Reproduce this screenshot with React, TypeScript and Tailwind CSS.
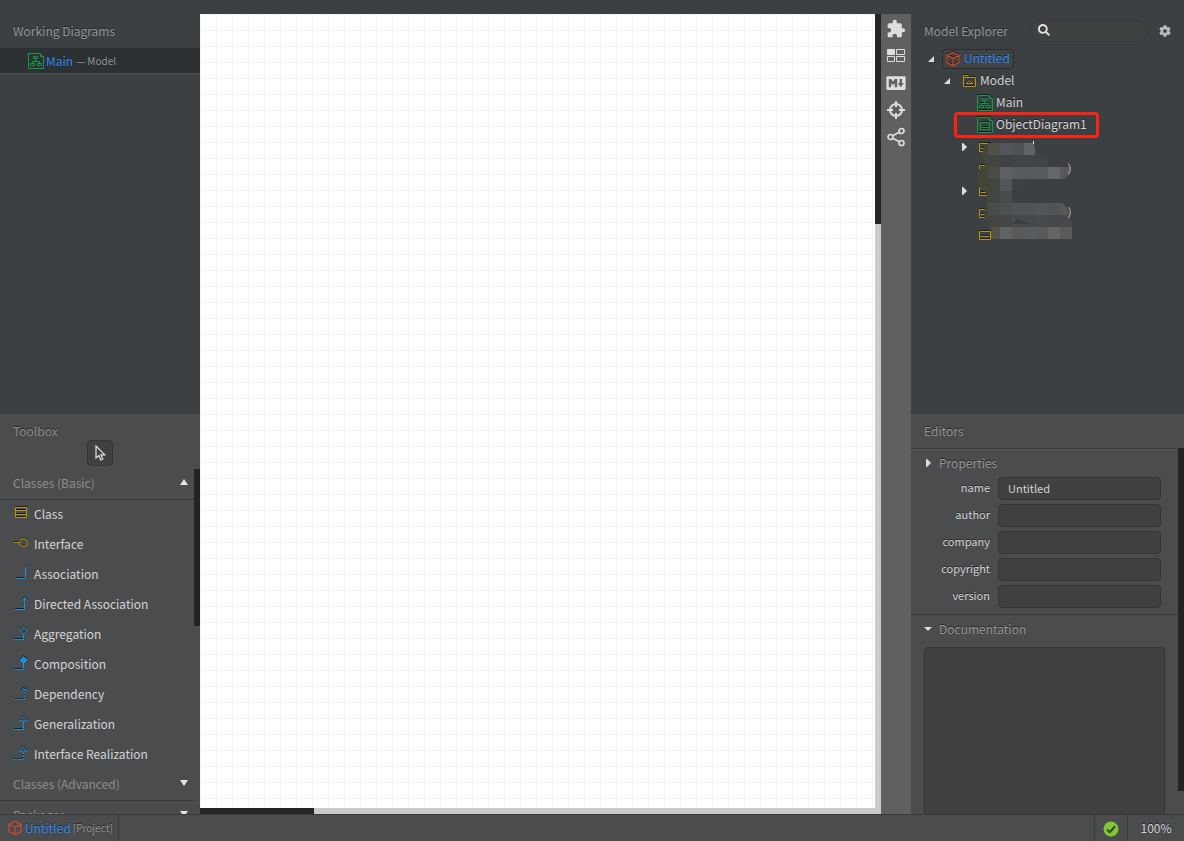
import type { ReactNode } from "react"
import { FaCog, FaSearch } from "react-icons/fa"
import { IoLogoMarkdown } from "react-icons/io"
import { MdExtension } from "react-icons/md"

const toolIcons: Record<string, ReactNode> = {
    class: <path d="M1.5 1.5h11v10h-11z M1.5 4.5h11 M1.5 8.5h11" stroke="#b8960c" />,
    interface: <path d="M0 6.5h5.5 M13.5 6.5a4 4 0 1 1-8 0a4 4 0 1 1 8 0" stroke="#b8960c" />,
    association: <path d="M2 12.5h9.500V1" />,
    directed: <path d="M1 13.5h9.500V1.5 M7 5l3.500-3.500L14 5" />,
    aggregation: <path d="M0 13.5h9.500V7.500 M9.500 .5l3.200 3.500l-3.200 3.500l-3.200-3.500z" />,
    composition: (
        <>
            <path d="M0 13.5h9.500V7" />
            <path d="M9.500 .5l3.500 3.500l-3.500 3.500l-3.500-3.500z" fill="#1a8ee0" />
        </>
    ),
    dependency: (
        <>
            <path d="M1 13.5h9.500V2" strokeDasharray="2 1" />
            <path d="M7 5l3.500-3.500L14 5" />
        </>
    ),
    generalization: <path d="M0 13.5h9.500V5 M5.500 5l4-4l4 4z" />,
    realization: (
        <>
            <path d="M0 13.5h9.500V5" strokeDasharray="2 1" />
            <path d="M5.500 5l4-4l4 4z" />
        </>
    ),
}

const tools = [
    { icon: "class", label: "Class" },
    { icon: "interface", label: "Interface" },
    { icon: "association", label: "Association" },
    { icon: "directed", label: "Directed Association" },
    { icon: "aggregation", label: "Aggregation" },
    { icon: "composition", label: "Composition" },
    { icon: "dependency", label: "Dependency" },
    { icon: "generalization", label: "Generalization" },
    { icon: "realization", label: "Interface Realization" },
]

const fields = [
    { name: "name", value: "Untitled" },
    { name: "author", value: "" },
    { name: "company", value: "" },
    { name: "copyright", value: "" },
    { name: "version", value: "" },
]

const CubeIcon = () => (
    <svg width="14" height="16" viewBox="0 0 14 16" fill="none" stroke="#d4492f" strokeWidth="1.2" strokeLinejoin="round">
        <path d="M7 1.5L13 4.3V11.5L7 14.7L1 11.5V4.3z M1 4.3L7 7.3L13 4.3 M7 7.3V14.7" />
    </svg>
)

const DiagramIcon = () => (
    <svg width="16" height="16" viewBox="0 0 16 16" fill="none" stroke="#0f9c46">
        <path d="M.5 .5h11.500l3.500 3.500v11.500H.5z M12.500 .5v3h3" />
        <path d="M5.500 3.500h4v2h-4z M2.500 10.500h4v2h-4z M9.500 10.500h4v2h-4z M7.500 6v2.500 M4.500 10.500v-2h7v2" />
    </svg>
)

const ObjectDiagramIcon = () => (
    <svg width="16" height="16" viewBox="0 0 16 16" fill="none" stroke="#0f9c46">
        <path d="M.5 .5h11.500l3.500 3.500v11.500H.5z M12.500 .5v3h3" />
        <path d="M3.500 5.500h9v7h-9z M5 10.500h6" />
    </svg>
)

const FolderIcon = () => (
    <svg width="14" height="12" viewBox="0 0 14 12" fill="none" stroke="#b8960c">
        <path d="M1.500 .5h4l1 2h7v9h-12z M1.500 2.500h5 M4.500 8.500h6l-3-3z" />
    </svg>
)

const BoxIcon = () => (
    <svg width="12" height="9" viewBox="0 0 12 9" fill="none" stroke="#b8960c">
        <path d="M.5 .5h11v8H.5z M2 5.500h8" />
    </svg>
)

const Expanded = () => (
    <svg width="6" height="6" viewBox="0 0 6 6" fill="#dcdcdc"><path d="M6 0v6H0z" /></svg>
)

const Collapsed = () => (
    <svg width="5" height="8" viewBox="0 0 5 8" fill="#dcdcdc"><path d="M0 0h1l4 4l-4 4h-1z" /></svg>
)

// Pixelated smudge that hides the names of the last rows
const Mosaic = () => {
    const cells = [
        [12, 3, "#53504a"], [24, 3, "#53565b"], [36, 3, "#505355"], [48, 3, "#616466"],
        [12, 15, "#434542"], [24, 15, "#404345"], [36, 15, "#414445"], [48, 15, "#424547"], [60, 15, "#404446"],
        [12, 27, "#4a4b45"], [24, 27, "#5d6164"], [36, 27, "#585b5e"], [48, 27, "#57595b"], [60, 27, "#585b5c"], [72, 27, "#646767"], [84, 27, "#575a5c"],
        [12, 39, "#434541"], [24, 39, "#51565b"], [36, 39, "#3f4143"],
        [12, 51, "#424542"], [24, 51, "#484b4c"],
        [12, 63, "#4b4c4a"], [24, 63, "#4d5051"], [36, 63, "#515354"], [48, 63, "#505354"], [60, 63, "#535658"], [72, 63, "#505455"], [84, 63, "#55595a"],
        [12, 75, "#444641"], [24, 75, "#434648"], [36, 75, "#47494b"], [48, 75, "#46494b"], [60, 75, "#474a4c"], [72, 75, "#444849"], [84, 75, "#47494b"],
        [15, 87, "#565246"], [24, 87, "#5f6264"], [36, 87, "#57595b"], [48, 87, "#5a5d5f"], [60, 87, "#57595b"], [72, 87, "#636565"], [84, 87, "#585a5c"],
    ]
    return (
        <svg className="absolute top-[92px] left-[65px] pointer-events-none" width="100" height="104" viewBox="0 0 100 104" aria-hidden="true">
            <path d="M13 3Q7 4 6 15L10 25Q1 27 1 38Q2 46 7 50L11 54V63Q7 70 9 80L13 87H16V3z" fill="#45463a" />
            <clipPath id="smudge">
                <path d="M12 0H54Q60 3 59 15L80 17Q92 20 94 27Q94 36 88 39H48V51H36V63H86Q92 66 93 76L96 82V99H15V87H12Q8 80 12 66z" />
            </clipPath>
            <g clipPath="url(#smudge)">
                {cells.map(([x, y, fill]) => (
                    <rect key={`${x}-${y}`} x={x} y={y} width="12" height="12" fill={String(fill)} />
                ))}
            </g>
            <path d="M41 78l-4 6h17z" fill="#3b4042" />
            <path d="M57.500 1v3" stroke="#e8e8e8" />
            <path d="M92.500 23.500q3.500 5.500 0 11 M92.500 67q3.500 5.500 0 11" stroke="#d0b486" fill="none" />
        </svg>
    )
}

const TreeRow = ({ level, arrow, icon, label, selected, marked }: { level: number, arrow?: ReactNode, icon: ReactNode, label?: string, selected?: boolean, marked?: boolean }) => {
    const indent = ["pl-[15px]", "pl-[31px]", "pl-[47px]"][level]
    return (
        <li className={`relative flex h-[22px] items-center ${indent}`}>
            <span className={`flex w-4 shrink-0 items-center ${level == 2 ? "pl-1" : "pl-[2px]"}`}>{arrow}</span>
            <span className={`flex h-5 items-center gap-[3px] rounded-[3px] border pl-[2px] pr-[3px] ${selected ? "border-[#292c2d] bg-[#424344] text-[#2f8af0]" : "border-transparent"}`}>
                <span className="flex w-4 justify-center drop-shadow-[0_-1px_0_#1c1e20]">{icon}</span>
                <span className="leading-5 pb-[2px]">{label}</span>
            </span>
            {marked && <span className="absolute -top-[2px] left-[43px] h-[26px] w-[145px] rounded-[4px] border-3 border-[#fb2313]" />}
        </li>
    )
}

const Title = ({ children }: { children: ReactNode }) => (
    <h2 className="flex h-[34px] shrink-0 items-center pl-[13px] text-[#969798]">{children}</h2>
)

const LeftSidebar = () => (
    <aside className="flex w-[200px] shrink-0 flex-col">
        <section className="min-h-0 flex-1">
            <Title>Working Diagrams</Title>
            <a href="#main" className="flex h-[26px] items-center border-t border-b border-t-[#292c2e] border-b-[#4c5052] bg-[#2e3133] pl-7">
                <DiagramIcon />
                <span className="ml-[2px] text-[#2f8af0]">Main</span>
                <span className="ml-[3px] text-[10px] text-[#939495]">— Model</span>
            </a>
        </section>
        <section className="flex h-[400px] shrink-0 flex-col bg-[#4b4c4d]">
            <h2 className="shrink-0 pt-2 pl-[13px] leading-[18px] text-[#8d8e8f]">Toolbox</h2>
            <button type="button" aria-label="Select" className="mx-auto flex size-[26px] shrink-0 items-center justify-center rounded-[4px] border border-[#343635] bg-[#404241]">
                <svg width="12" height="16" viewBox="0 0 12 16" fill="none" stroke="#e2e2e2" strokeWidth="1.2">
                    <path d="M2 1V13L4.800 10.500L6.800 15L8.800 14L6.900 9.800H10.800z" />
                </svg>
            </button>
            <div className="mt-[3px] flex min-h-0 flex-1 overflow-hidden">
                <div className="flex-1">
                    <ToolGroup label="Classes (Basic)" open />
                    <ul>
                        {tools.map((tool) => (
                            <li key={tool.label}>
                                <button type="button" className="flex h-[30px] w-full items-start gap-[6px] pl-[14px]">
                                    <svg className="mt-[6px] overflow-visible drop-shadow-[0_-1px_0_#1c1e20]" width="14" height="14" viewBox="0 0 14 14" fill="none" stroke="#1a8ee0">
                                        {toolIcons[tool.icon]}
                                    </svg>
                                    <span className="leading-[28px]">{tool.label}</span>
                                </button>
                            </li>
                        ))}
                    </ul>
                    <ToolGroup label="Classes (Advanced)" />
                    <ToolGroup label="Packages" />
                </div>
                <div className="w-[6px]"><div className="h-[157px] bg-[#242424]" /></div>
            </div>
        </section>
    </aside>
)

const ToolGroup = ({ label, open }: { label: string, open?: boolean }) => (
    <button type="button" className="flex h-[31px] w-full items-center justify-between border-b border-[#38393a] pr-[6px] pb-[2px] pl-[13px] text-[#8d8e8f]">
        {label}
        <svg className="mb-[2px]" width="8" height="6" viewBox="0 0 8 6" fill="#e4e4e4">
            <path d={open ? "M4 0L8 6H0z" : "M0 0H8L4 6z"} />
        </svg>
    </button>
)

const Canvas = () => (
    <main className="flex min-w-0 flex-1 flex-col">
        <div className="flex min-h-0 flex-1">
            <div className="flex-1 bg-white bg-[linear-gradient(to_right,#f3f3f3_1px,transparent_1px),linear-gradient(to_bottom,#f3f3f3_1px,transparent_1px)] bg-size-[16px_16px]" />
            <div className="w-[6px] bg-[#cbcbcb]"><div className="h-[210px] bg-[#242424]" /></div>
        </div>
        <div className="h-[6px] bg-[#cbcbcb]"><div className="h-full w-[114px] bg-[#242424]" /></div>
    </main>
)

const Toolbar = () => (
    <nav className="flex w-[30px] shrink-0 flex-col items-center bg-[#5f6062] pt-px text-[#dedede]">
        <button type="button" aria-label="Extensions" className="flex h-[27px] items-center"><MdExtension size={20} /></button>
        <button type="button" aria-label="Layout" className="flex h-[27px] items-center">
            <svg width="18" height="13" viewBox="0 0 18 13" fill="none" stroke="currentColor">
                <path d="M.5 .5h7v5h-7z" fill="currentColor" />
                <path d="M9.500 .5h8v5h-8z M.5 7.500h7v5h-7z M9.500 7.500h8v5h-8z" />
            </svg>
        </button>
        <button type="button" aria-label="Markdown" className="flex h-[27px] items-center"><IoLogoMarkdown size={22} /></button>
        <button type="button" aria-label="Locate" className="flex h-[27px] items-center">
            <svg width="18" height="18" viewBox="0 0 18 18" fill="none" stroke="currentColor" strokeWidth="2">
                <circle cx="9" cy="9" r="6" />
                <path d="M9 0v6 M9 12v6 M0 9h6 M12 9h6" />
            </svg>
        </button>
        <button type="button" aria-label="Share" className="flex h-[27px] items-center">
            <svg width="18" height="20" viewBox="0 0 18 20" fill="none" stroke="currentColor" strokeWidth="1.7">
                <circle cx="3.5" cy="10" r="2.5" />
                <circle cx="14.5" cy="4" r="2.5" />
                <circle cx="14.5" cy="16" r="2.5" />
                <path d="M5.700 8.800L12.300 5.200 M5.700 11.200L12.300 14.800" />
            </svg>
        </button>
    </nav>
)

const Explorer = () => (
    <section className="min-h-0 flex-1">
        <div className="flex items-center justify-between pr-[13px]">
            <Title>Model Explorer</Title>
            <div className="flex items-center gap-[11px]">
                <label className="flex h-[22px] w-[117px] items-center rounded-full border border-[#383c3d] bg-[#404241] pb-[2px] pl-[6px]">
                    <FaSearch size={12} className="shrink-0 text-[#e0e0e0]" />
                    <input type="text" aria-label="Search" className="w-full min-w-0 bg-transparent px-1 outline-none" />
                </label>
                <button type="button" aria-label="Settings" className="text-[#b9babb]"><FaCog size={12} /></button>
            </div>
        </div>
        <ul className="relative">
            <TreeRow level={0} arrow={<Expanded />} icon={<CubeIcon />} label="Untitled" selected />
            <TreeRow level={1} arrow={<Expanded />} icon={<FolderIcon />} label="Model" />
            <TreeRow level={2} icon={<DiagramIcon />} label="Main" />
            <TreeRow level={2} icon={<ObjectDiagramIcon />} label="ObjectDiagram1" marked />
            <TreeRow level={2} arrow={<Collapsed />} icon={<BoxIcon />} />
            <TreeRow level={2} icon={<BoxIcon />} />
            <TreeRow level={2} arrow={<Collapsed />} icon={<BoxIcon />} />
            <TreeRow level={2} icon={<BoxIcon />} />
            <TreeRow level={2} icon={<BoxIcon />} />
            <Mosaic />
        </ul>
    </section>
)

const Editors = () => (
    <section className="flex h-[400px] shrink-0 flex-col bg-[#4b4c4d]">
        <Title>Editors</Title>
        <div className="flex min-h-0 flex-1 overflow-hidden">
            <div className="flex flex-1 flex-col border-t border-[#38393a]">
                <h3 className="flex h-7 shrink-0 items-center border-t border-[#58595a] pb-[2px] pl-[15px] text-[#969798]">
                    <Collapsed /><span className="ml-2">Properties</span>
                </h3>
                <div className="flex flex-col gap-1 pb-[6px]">
                    {fields.map((field) => (
                        <div key={field.name} className="flex items-center gap-2 pr-[17px] text-[11px]">
                            <label htmlFor={field.name} className="w-[79px] shrink-0 pb-[3px] text-right">{field.name}</label>
                            <input id={field.name} type="text" defaultValue={field.value} className="h-[23px] w-full min-w-0 rounded-[4px] border border-[#343635] bg-[#404241] px-[9px] pb-[2px] outline-none" />
                        </div>
                    ))}
                </div>
                <h3 className="flex h-[33px] shrink-0 items-center border-t border-[#38393a] pb-[5px] pl-[13px] text-[#969798]">
                    <svg width="8" height="4" viewBox="0 0 8 4" fill="#dcdcdc"><path d="M0 0h8l-4 4z" /></svg>
                    <label htmlFor="doc" className="ml-[7px]">Documentation</label>
                </h3>
                <textarea id="doc" className="mx-[13px] h-[200px] shrink-0 resize-none rounded-[4px] border border-[#343635] bg-[#404241] outline-none" />
            </div>
            <div className="w-[6px]"><div className="h-[343px] bg-[#242424]" /></div>
        </div>
    </section>
)

const StatusBar = () => (
    <footer className="flex h-[27px] shrink-0 border-t border-[#38393a] bg-[#4b4c4d]">
        <div className="flex items-center border-r border-[#38393a] pr-[5px] pl-2">
            <CubeIcon />
            <span className="ml-[3px] text-[#2f8af0]">Untitled</span>
            <span className="ml-[2px] text-[10px] text-[#939495]">[Project]</span>
        </div>
        <div className="ml-auto flex w-[33px] items-center justify-center border-l border-[#38393a] pt-[2px]">
            <svg width="16" height="16" viewBox="0 0 16 16">
                <circle cx="8" cy="8" r="7.5" fill="#80c832" />
                <path d="M4 8.500l2.800 2.700l5.200-6" fill="none" stroke="#3c4a30" strokeWidth="2.2" />
            </svg>
        </div>
        <div className="flex w-[57px] items-center justify-center border-l border-[#38393a]">100%</div>
    </footer>
)

export default function App() {
    return (
        <div className="flex h-screen flex-col overflow-hidden bg-[#3c4042] pt-[14px] font-['Noto_Sans_CJK_SC',sans-serif] text-xs leading-5 text-[#d4d5d6] text-shadow-[0_-1px_0_#242628]">
            <div className="flex min-h-0 flex-1">
                <LeftSidebar />
                <Canvas />
                <Toolbar />
                <aside className="flex w-[273px] shrink-0 flex-col">
                    <Explorer />
                    <Editors />
                </aside>
            </div>
            <StatusBar />
        </div>
    )
}
